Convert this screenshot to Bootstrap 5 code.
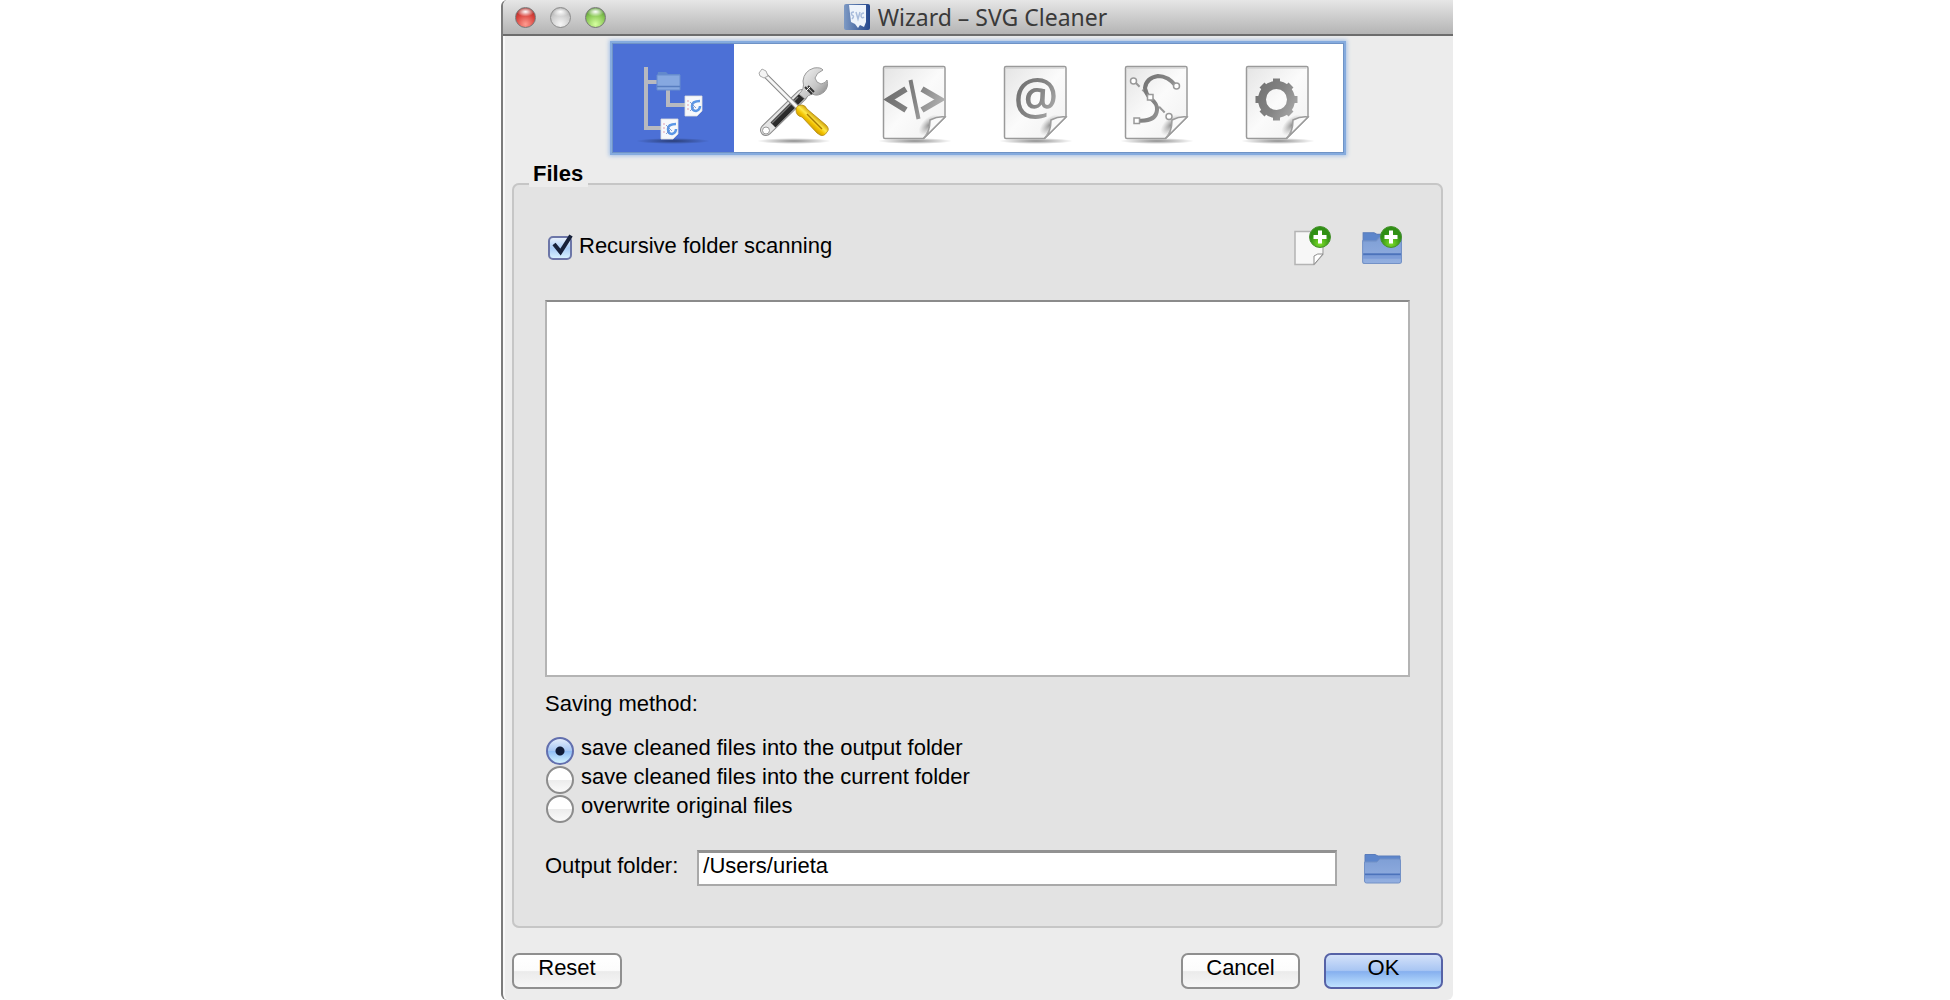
<!DOCTYPE html>
<html lang="en">
<head>
<meta charset="utf-8">
<meta name="viewport" content="width=device-width, initial-scale=1">
<title>Wizard – SVG Cleaner</title>
<link rel="stylesheet" href="https://cdn.jsdelivr.net/npm/bootstrap@5.3.0/dist/css/bootstrap.min.css">
<style>
body{background:#fff;color:#000;font:22px/26px "Liberation Sans",Arial,sans-serif}
.win{max-width:952px;background:#ececec;border-left:2px solid #7b7b7b;border-radius:6px 0 6px 6px;box-shadow:inset 2px 0 0 #f8f8f8}
.titlebar{height:36px;background:linear-gradient(#e6e6e6,#b4b4b4);border-bottom:2px solid #6c6c6c;border-radius:6px 0 0 0;padding:0 108px 0 12px}
.titlebar h1{font:23px/32px "Noto Sans","Open Sans",sans-serif;color:#3a3a3a}
.light{width:21px;height:21px;border-radius:50%;border:1px solid #777;padding:0}
.light.red{background:radial-gradient(ellipse 45% 25% at 50% 20%,#fff,transparent),radial-gradient(circle at 50% 85%,#ff9c90,#d8423c 55%,#8d2420)}
.light.grey{background:radial-gradient(ellipse 45% 25% at 50% 20%,#fff,transparent),radial-gradient(circle at 50% 85%,#f6f6f6,#c8c8c8 60%,#8f8f8f);border-color:#8c8c8c}
.light.green{background:radial-gradient(ellipse 45% 25% at 50% 20%,#fff,transparent),radial-gradient(circle at 50% 85%,#d6ffa0,#86c552 55%,#3f7d25)}
.steps{margin-top:8px;background:#fff;padding-right:4px;box-shadow:0 0 0 1px #6f93c6,0 0 0 3px #85abde,0 0 4px 4px #a4c0e6}
.step{border:0;padding:0;background:none;width:121px;height:108px}
.step.active{background:#4c70d6}
.step svg,.tool svg{display:block}
.group{margin:9px 10px 0 9px;border:2px solid #c6c6c6;border-radius:7px;background:#e3e3e3;padding:0 31px 40px}
.group legend{float:none;width:auto;font:bold 22px/26px "Liberation Sans",Arial,sans-serif;margin:0 0 0 -16px;padding:0 5px 20px 4px;background:linear-gradient(#ececec,#ececec) 0 0/100% 26px no-repeat}
.toprow{margin-top:19px;height:40px}
.tool{border:0;padding:0;background:none}
.filelist{margin-top:34px;background:#fff;border:2px solid #b4b4b4;border-top-color:#8b8b8b;min-height:120px}
.box{appearance:none;width:24px;height:24px;margin:3px 7px 0 3px;border:2px solid #6c76a8;border-radius:5px;background:linear-gradient(#e6effb,#a9ccf6 50%,#d6f1ff)}
.tick{position:absolute;left:6px;top:1px;pointer-events:none}
.method{margin-top:14px}
.choice{height:29px;line-height:30px}
.dot{appearance:none;width:28px;height:28px;margin:4px 7px -3px 1px;border:2px solid #8c8c8c;border-radius:50%;background:linear-gradient(#fff,#fff 50%,#ececec 51%,#fafafa)}
.dot:checked{border-color:#626fae;background:radial-gradient(circle,#101c38 0 4px,transparent 5px),linear-gradient(#e3edfb,#a5c6f3 50%,#8fbdf5 51%,#d4f3ff)}
.outrow{margin-top:30px}
.path{height:36px;min-width:0;border:2px solid #a9a9a9;border-top:3px solid #929292;border-radius:0;background:#fff;color:#000;padding:0 4px 5px;margin-left:19px;margin-right:26px;outline:0}
.foot{padding:25px 10px 11px 9px}
.aqua{height:36px;border:2px solid #8f8f8f;border-radius:7px;padding:0 0 7px;font-size:22px;line-height:25px;color:#000;background:linear-gradient(#fff,#fcfcfc 48%,#ebebeb 52%,#f6f6f6);width:119px}
.aqua.short{width:110px}
.aqua.main{border-color:#5662a6;background:linear-gradient(#d3e1f9,#a9c6f3 48%,#86b0ef 52%,#bfe2ff)}
</style>
<script src="https://cdn.jsdelivr.net/npm/bootstrap@5.3.0/dist/js/bootstrap.bundle.min.js"></script>
</head>
<body>
<svg width="0" height="0" class="position-absolute" aria-hidden="true">
<defs>
<linearGradient id="paper" x1="0" y1="0" x2="1" y2="1"><stop offset="0" stop-color="#e4e4e4"/><stop offset=".5" stop-color="#fbfbfb"/><stop offset="1" stop-color="#f0f0f0"/></linearGradient>
<linearGradient id="ink" gradientUnits="userSpaceOnUse" x1="32" y1="40" x2="88" y2="70"><stop offset="0" stop-color="#6c6c6c"/><stop offset=".5" stop-color="#848484"/><stop offset="1" stop-color="#b8b8b8"/></linearGradient>
<radialGradient id="shade"><stop offset="0" stop-color="#000" stop-opacity=".45"/><stop offset=".6" stop-color="#000" stop-opacity=".18"/><stop offset="1" stop-color="#000" stop-opacity="0"/></radialGradient>
<radialGradient id="curlshade"><stop offset="0" stop-color="#777" stop-opacity=".8"/><stop offset="1" stop-color="#999" stop-opacity="0"/></radialGradient>
<linearGradient id="blue" x1="0" y1="0" x2="0" y2="1"><stop offset="0" stop-color="#7f9fd6"/><stop offset="1" stop-color="#93afe0"/></linearGradient>
<radialGradient id="plusbg" cx=".5" cy=".8"><stop offset="0" stop-color="#7fe02a"/><stop offset="1" stop-color="#2f8f14"/></radialGradient>
<linearGradient id="chrome" x1="0" y1="0" x2="1" y2="1"><stop offset="0" stop-color="#f8f8f8"/><stop offset=".6" stop-color="#c4c4c4"/><stop offset="1" stop-color="#777"/></linearGradient>
<linearGradient id="gold" gradientUnits="userSpaceOnUse" x1="73" y1="81" x2="82" y2="71"><stop offset="0" stop-color="#c99700"/><stop offset=".35" stop-color="#f3c200"/><stop offset=".6" stop-color="#ffea4a"/><stop offset="1" stop-color="#c99400"/></linearGradient>
<g id="sheet">
<ellipse cx="60" cy="97" rx="37" ry="3" fill="url(#shade)"/>
<path d="M30 22.500H88.500Q90 22.500 90 24V73L68.500 94.500H30Q28.500 94.500 28.500 93V24Q28.500 22.500 30 22.500Z" fill="url(#paper)" stroke="#9a9a9a" stroke-width="1.500"/>
<path d="M30 24H88.500" stroke="#c8c8c8"/>
</g>
<g id="fold">
<ellipse cx="74" cy="81" rx="13" ry="7" transform="rotate(-45 74 81)" fill="url(#curlshade)"/>
<path d="M90 73Q83 72 75 76Q75 88 68.500 94.500Z" fill="#fafafa" stroke="#9a9a9a" stroke-width="1.500"/>
<path d="M75 76Q75 88 68.500 94.500L74 85Z" fill="#b5b5b5"/>
</g>
<g id="plus"><circle cx="11" cy="11" r="10.500" fill="url(#plusbg)" stroke="#48922f"/><path d="M11 4.500V17.500M4.500 11H17.500" stroke="#fff" stroke-width="4"/></g>
<g id="folder">
<path d="M2 3.500H12L15 5H37V13H2Z" fill="#5d86cb" stroke="#5a7cbb"/>
<path d="M1.500 11H14L17 8H36Q37.500 8 37.500 10V30Q37.500 32 35.500 32H3.500Q1.500 32 1.500 30V11Z" fill="url(#blue)" stroke="#7391c6"/>
<path d="M2 23.500H37" stroke="#4c73bb" stroke-width="2"/><path d="M2 26H37" stroke="#7c9cd8" stroke-width="3"/>
</g>
<g id="mini"><path d="M0 0H17V15L12 20H0Z" fill="#f6f8fc" stroke="#ddd" stroke-width=".8"/><path d="M15 5Q7 5 7 10Q7 15 11 15Q15 14 15 10" fill="none" stroke="#5b97e6" stroke-width="2.500"/><path d="M3 4V16" stroke="#e0a0b0" stroke-dasharray="2 2"/><path d="M5 6L11 12M5 15L9 11" stroke="#6d8ac8" stroke-width=".8"/></g>
</defs>
</svg>

<div class="d-flex justify-content-center ps-1 min-vh-100">
<main class="win d-flex flex-column w-100">
<header class="titlebar d-flex align-items-center">
  <div class="d-flex align-items-center" style="gap:14px">
    <button class="light red" aria-label="Close"></button><button class="light grey" aria-label="Minimize"></button><button class="light green" aria-label="Zoom"></button>
  </div>
  <div class="d-flex align-items-center justify-content-center flex-grow-1 gap-2">
    <svg width="26" height="26" viewBox="0 0 26 26" aria-hidden="true"><defs><linearGradient id="appbg" x1="0" x2="1"><stop offset="0" stop-color="#7e9ac4"/><stop offset="1" stop-color="#24468c"/></linearGradient></defs><rect width="26" height="26" rx="2" fill="url(#appbg)"/><path d="M5 1H22V18L20 23L16 21L14 24L11 20L7 18Z" fill="#eef3fb"/><path d="M10 8Q6 8 8 11Q11 12 8 15M12 8L14 15L16 8M20 9Q17 9 17 12Q18 15 20 13" fill="none" stroke="#a9bcdc" stroke-width="1.500"/></svg>
    <h1 class="m-0 text-nowrap">Wizard – SVG Cleaner</h1>
  </div>
</header>

<nav class="steps d-flex align-self-center" role="tablist" aria-label="Wizard pages">
  <button class="step active" role="tab" aria-selected="true" aria-label="Files"><svg width="121" height="108" viewBox="0 0 121 108">
    <ellipse cx="60" cy="97" rx="37" ry="3" fill="url(#shade)"/>
    <path d="M33 23V84H48M33 38H44M55 46V61H73" fill="none" stroke="#b7b9c0" stroke-width="4"/>
    <path d="M45 28H53L55 30H67V35H44Z" fill="#6289cc"/><path d="M44 31H67V46H44Z" fill="#86a8e0" stroke="#668cce"/><path d="M44 42.500H67" stroke="#577dc0" stroke-width="1.500"/>
    <use href="#mini" x="72" y="52"/><use href="#mini" x="48" y="75"/></svg></button>
  <button class="step" role="tab" aria-label="Options"><svg width="121" height="108" viewBox="0 0 121 108">
    <ellipse cx="60" cy="97" rx="37" ry="3" fill="url(#shade)"/>
    <path d="M32 86L68 51" stroke="#8a8a8a" stroke-width="12" stroke-linecap="round"/>
    <path d="M32 86L68 51" stroke="#e4e4e4" stroke-width="10" stroke-linecap="round"/>
    <path d="M39 81L68 52" stroke="#2b2b2b" stroke-width="7"/><path d="M38 79L64 53" stroke="#777" stroke-width="1.500"/>
    <circle cx="32" cy="86.500" r="3.500" fill="#fff" stroke="#999"/>
    <path d="M65 50Q71 45 69 37Q70 27 80 24Q87 23 89 26Q82 29 81 34Q82 39 87 40Q92 39 93 36Q95 43 90 48Q84 53 78 50Q74 51 71 55Z" fill="url(#chrome)" stroke="#999"/>
    <path d="M71 43L78 50M74 42L80 48" stroke="#333" stroke-width="2"/><path d="M72 47L76 43" stroke="#fff"/>
    <path d="M30 30L65 65" stroke="#858585" stroke-width="5"/><path d="M30 30L65 65" stroke="#f6f6f6" stroke-width="3"/>
    <path d="M25 29L28 25L32 27L34 32L30 34L26 32Z" fill="#f4f4f4" stroke="#aaa"/>
    <path d="M62 66Q62 61 68 61Q71 61 73 65L92 81Q96 85 93 88Q90 93 86 91L83 89L68 73Q62 72 62 66Z" fill="url(#gold)" stroke="#b18a14" stroke-width=".8"/>
    <path d="M73 70L88 85" stroke="#a97c00" stroke-width="1.500"/></svg></button>
  <button class="step" role="tab" aria-label="Elements"><svg width="121" height="108" viewBox="0 0 121 108"><use href="#sheet"/>
    <g fill="none" stroke="url(#ink)"><path d="M51 45L34 55.500L51 66M67 45L85 55.500L67 66" stroke-width="6"/><path d="M55.500 36L63.500 75" stroke-width="4"/></g><use href="#fold"/></svg></button>
  <button class="step" role="tab" aria-label="Attributes"><svg width="121" height="108" viewBox="0 0 121 108"><use href="#sheet"/>
    <text x="60" y="70" text-anchor="middle" font-family="Open Sans" font-weight="600" font-size="50" fill="url(#ink)">@</text><use href="#fold"/></svg></button>
  <button class="step" role="tab" aria-label="Paths"><svg width="121" height="108" viewBox="0 0 121 108"><use href="#sheet"/><use href="#fold"/>
    <path d="M37 37L72 73" stroke="#999" stroke-width="2" stroke-dasharray="8 4"/>
    <path d="M79 42Q71 32 61 32Q49 34 48 44Q49 50 53 54Q61 60 60 66Q59 78 40 76.500" fill="none" stroke="url(#ink)" stroke-width="4"/>
    <g fill="#fff" stroke="#999" stroke-width="1.500"><circle cx="36.500" cy="37" r="3"/><circle cx="79.500" cy="42" r="3"/><circle cx="72" cy="72.500" r="3"/><path d="M50.500 50.500h5.500v5.500h-5.500zM37 74h5.500v5.500H37z"/></g></svg></button>
  <button class="step" role="tab" aria-label="Preferences"><svg width="121" height="108" viewBox="0 0 121 108"><use href="#sheet"/>
    <g fill="none" stroke="url(#ink)"><circle cx="58.500" cy="55.500" r="14.500" stroke-width="8"/>
    <path d="M58.500 34.500V39M58.500 72V76.500M37.500 55.500H42M75 55.500H79.500M44 41L47 44M70 67L73 70M44 70L47 67M70 44L73 41" stroke-width="7"/></g><use href="#fold"/></svg></button>
</nav>

<fieldset class="group d-flex flex-column flex-grow-1">
  <legend>Files</legend>
  <div class="toprow d-flex align-items-center justify-content-between">
    <label class="d-flex align-items-center position-relative"><input class="box" type="checkbox" checked>Recursive folder scanning
      <svg class="tick" width="24" height="24" viewBox="0 0 24 24" aria-hidden="true"><path d="M3 10L9.500 18L20 1.500" fill="none" stroke="#17213a" stroke-width="4"/></svg></label>
    <div class="d-flex me-1 pe-1" style="gap:28px">
      <button class="tool" aria-label="Add files"><svg width="40" height="40" viewBox="0 0 40 40"><path d="M3 5.500H31V28L22 38.500H3Z" fill="#f7f7f7" stroke="#b4b4b4" stroke-width="1.500"/><path d="M31 28Q25 27 22 30V38.500Z" fill="#fff" stroke="#8c8c8c"/><use href="#plus" x="17" y="0"/></svg></button>
      <button class="tool" aria-label="Add folder"><svg width="42" height="40" viewBox="0 0 42 40"><g transform="translate(1 3) scale(1.080 1.080)"><use href="#folder"/></g><use href="#plus" x="20" y="0"/></svg></button>
    </div>
  </div>
  <div class="filelist flex-grow-1" role="listbox" aria-label="Files to clean" tabindex="0"></div>
  <div class="method" id="method">Saving method:</div>
  <div class="mt-3" role="radiogroup" aria-labelledby="method">
    <label class="choice d-flex"><input class="dot" type="radio" name="save" checked>save cleaned files into the output folder</label>
    <label class="choice d-flex"><input class="dot" type="radio" name="save">save cleaned files into the current folder</label>
    <label class="choice d-flex"><input class="dot" type="radio" name="save">overwrite original files</label>
  </div>
  <div class="outrow d-flex align-items-center">
    <label for="out" class="text-nowrap pb-1">Output folder:</label>
    <input class="path flex-grow-1" id="out" type="text" value="/Users/urieta">
    <button class="tool me-2" aria-label="Choose output folder"><svg width="39" height="34" viewBox="0 0 39 34"><use href="#folder"/></svg></button>
  </div>
</fieldset>

<footer class="foot d-flex align-items-center">
  <button class="aqua short me-auto" type="reset">Reset</button>
  <button class="aqua me-4" type="button">Cancel</button>
  <button class="aqua main" type="submit">OK</button>
</footer>
</main>
</div>
</body>
</html>
